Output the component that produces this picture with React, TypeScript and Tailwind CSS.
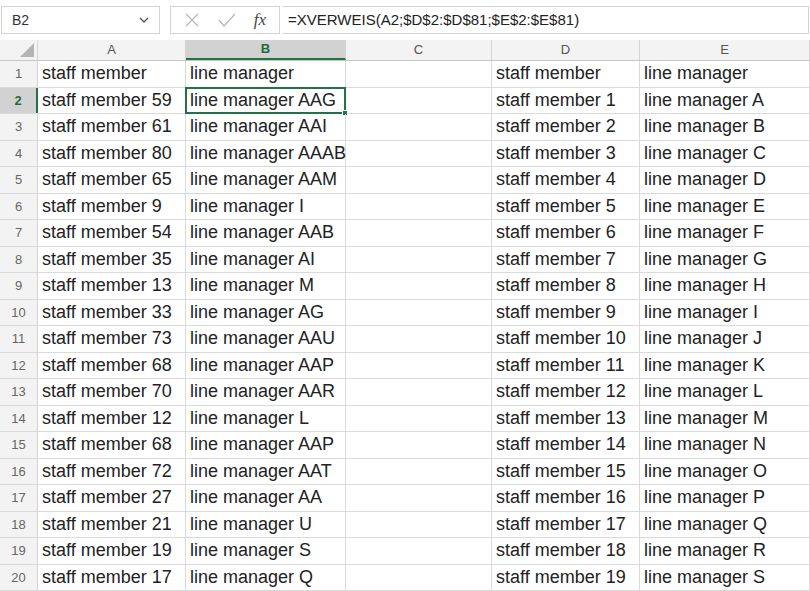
import React from "react";

const left = [
  ["staff member", "line manager"],
  ["staff member 59", "line manager AAG"],
  ["staff member 61", "line manager AAI"],
  ["staff member 80", "line manager AAAB"],
  ["staff member 65", "line manager AAM"],
  ["staff member 9", "line manager I"],
  ["staff member 54", "line manager AAB"],
  ["staff member 35", "line manager AI"],
  ["staff member 13", "line manager M"],
  ["staff member 33", "line manager AG"],
  ["staff member 73", "line manager AAU"],
  ["staff member 68", "line manager AAP"],
  ["staff member 70", "line manager AAR"],
  ["staff member 12", "line manager L"],
  ["staff member 68", "line manager AAP"],
  ["staff member 72", "line manager AAT"],
  ["staff member 27", "line manager AA"],
  ["staff member 21", "line manager U"],
  ["staff member 19", "line manager S"],
  ["staff member 17", "line manager Q"],
];
const letters = "ABCDEFGHIJKLMNOPQRS";

const cols = [
  { k: "A", w: "w-[148px]" },
  { k: "B", w: "w-[160px]" },
  { k: "C", w: "w-[146px]" },
  { k: "D", w: "w-[148px]" },
  { k: "E", w: "w-[170px]" },
];

export default function App() {
  return (
    <div className="w-[810px] h-[591px] overflow-hidden bg-white text-[#222]" style={{ fontFamily: "'Liberation Sans', Arial, sans-serif" }}>
      {/* formula bar */}
      <div className="h-[40px] flex items-center gap-[10px] px-[1px] bg-white">
        <div className="w-[159px] h-[28px] border border-[#d4d4d4] flex items-center justify-between px-[10px] text-[14px] text-[#333]">
          <span>B2</span>
          <svg width="10" height="6" viewBox="0 0 10 6"><path d="M1 1l4 4 4-4" stroke="#555" strokeWidth="1.3" fill="none" /></svg>
        </div>
        <div className="flex-1 h-[28px] flex items-center">
          <div className="w-[110px] h-full border border-[#d4d4d4] flex items-center justify-around px-[4px]">
            <svg width="16" height="16" viewBox="0 0 16 16"><path d="M2 2l12 12M14 2L2 14" stroke="#b5b5b5" strokeWidth="1.2" /></svg>
            <svg width="18" height="16" viewBox="0 0 18 16"><path d="M1 8l5 6L17 2" stroke="#b5b5b5" strokeWidth="1.2" fill="none" /></svg>
            <span className="italic text-[17px] text-[#444]" style={{ fontFamily: "'Liberation Serif', serif" }}>fx</span>
          </div>
          <div className="flex-1 h-full border border-[#d4d4d4] border-l-0 ml-[3px] flex items-center px-[5px] text-[15px] text-[#222]">
            =XVERWEIS(A2;$D$2:$D$81;$E$2:$E$81)
          </div>
        </div>
      </div>
      {/* column header */}
      <div className="flex h-[21px] bg-[#f3f3f3] border-b border-[#c6c6c6] text-[13px] text-[#555]">
        <div className="w-[38px] border-r border-[#d4d4d4] relative">
          <svg className="absolute right-[3px] bottom-[3px]" width="14" height="14" viewBox="0 0 14 14"><path d="M14 0V14H0Z" fill="#b4b4b4" /></svg>
        </div>
        {cols.map((c) => (
          <div key={c.k} className={`${c.w} shrink-0 flex items-center justify-center border-r border-[#d4d4d4] ${c.k === "B" ? "bg-[#d2d2d2] text-[#1e6b41] font-bold border-b-2 border-b-[#217346]" : ""}`}>
            {c.k}
          </div>
        ))}
      </div>
      {/* rows */}
      {left.map((r, i) => {
        const d = i === 0 ? ["staff member", "line manager"] : [`staff member ${i}`, `line manager ${letters[i - 1]}`];
        const vals = [r[0], r[1], "", d[0], d[1]];
        return (
          <div key={i} className="flex h-[26.5px] border-b border-[#dadada] text-[18px]">
            <div className={`w-[38px] shrink-0 flex items-center justify-center text-[13px] border-r border-[#d4d4d4] ${i === 1 ? "bg-[#d2d2d2] text-[#1e6b41] font-bold border-r-2 border-r-[#217346]" : "bg-[#f3f3f3] text-[#666]"}`}>
              {i + 1}
            </div>
            {cols.map((c, j) => (
              <div key={c.k} className={`${c.w} shrink-0 relative flex items-center px-[4px] whitespace-nowrap border-r border-[#dadada]`}>
                {vals[j]}
                {i === 1 && j === 1 && (
                  <div className="absolute -inset-[1px] border-2 border-[#217346]">
                    <div className="absolute -right-[4px] -bottom-[4px] w-[6px] h-[6px] bg-[#217346] border border-white" />
                  </div>
                )}
              </div>
            ))}
          </div>
        );
      })}
    </div>
  );
}
